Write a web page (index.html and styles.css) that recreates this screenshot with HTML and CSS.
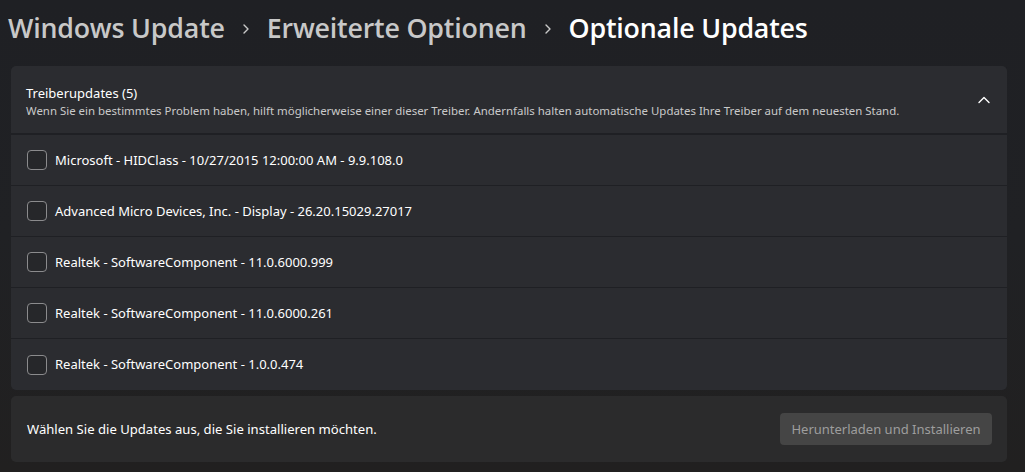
FILE: index.html
```html
<!DOCTYPE html>
<html lang="de">
<head>
<meta charset="utf-8">
<title>Optionale Updates</title>
<link rel="stylesheet" href="styles.css">
</head>
<body>
<div class="page">
  <h1 class="breadcrumb">
    <span class="crumb">Windows Update</span>
    <svg class="sep" width="10" height="12" viewBox="0 0 10 12"><path d="M3 2 L7 6 L3 10" fill="none" stroke="#c9c9c9" stroke-width="1.4" stroke-linecap="round" stroke-linejoin="round"/></svg>
    <span class="crumb">Erweiterte Optionen</span>
    <svg class="sep" width="10" height="12" viewBox="0 0 10 12"><path d="M3 2 L7 6 L3 10" fill="none" stroke="#c9c9c9" stroke-width="1.4" stroke-linecap="round" stroke-linejoin="round"/></svg>
    <span class="crumb current">Optionale Updates</span>
  </h1>

  <section class="expander">
    <div class="exp-header">
      <div class="exp-text">
        <div class="exp-title">Treiberupdates (5)</div>
        <div class="exp-desc">Wenn Sie ein bestimmtes Problem haben, hilft möglicherweise einer dieser Treiber. Andernfalls halten automatische Updates Ihre Treiber auf dem neuesten Stand.</div>
      </div>
      <svg class="chev" width="14" height="10" viewBox="0 0 14 10"><path d="M2 7.5 L7 2.5 L12 7.5" fill="none" stroke="#ffffff" stroke-width="1.4" stroke-linecap="round" stroke-linejoin="round"/></svg>
    </div>
    <div class="rows">
      <label class="row"><span class="box"></span><span class="row-text">Microsoft - HIDClass - 10/27/2015 12:00:00 AM - 9.9.108.0</span></label>
      <label class="row"><span class="box"></span><span class="row-text">Advanced Micro Devices, Inc. - Display - 26.20.15029.27017</span></label>
      <label class="row"><span class="box"></span><span class="row-text">Realtek - SoftwareComponent - 11.0.6000.999</span></label>
      <label class="row"><span class="box"></span><span class="row-text">Realtek - SoftwareComponent - 11.0.6000.261</span></label>
      <label class="row"><span class="box"></span><span class="row-text">Realtek - SoftwareComponent - 1.0.0.474</span></label>
    </div>
  </section>

  <section class="footer">
    <span class="footer-text">Wählen Sie die Updates aus, die Sie installieren möchten.</span>
    <button class="btn" disabled>Herunterladen und Installieren</button>
  </section>
</div>
</body>
</html>
```

FILE: styles.css
```css
* { box-sizing: border-box; }
html, body { margin: 0; padding: 0; }
body {
  width: 1025px;
  height: 472px;
  overflow: hidden;
  background: linear-gradient(180deg, #1f2024 0%, #202124 50%, #212020 100%);
  font-family: "Noto Sans", "Open Sans", sans-serif;
  color: #ffffff;
}
.page {
  display: flex;
  flex-direction: column;
  padding: 0 18px 0 11px;
}
.breadcrumb {
  margin: 0 0 0 -3px;
  height: 66px;
  display: flex;
  align-items: center;
  font-family: "Open Sans", sans-serif;
  font-weight: 600;
  font-size: 26.8px;
  letter-spacing: -0.2px;
  padding-bottom: 11px;
}
.crumb { color: #c8c8c8; }
.crumb.current { color: #ffffff; }
.sep { margin: 2px 16px 0 16px; }
.expander {
  border-radius: 5px;
  display: flex;
  flex-direction: column;
  gap: 2px;
  background: #1f2024;
}
.exp-header {
  background: #2b2c30;
  border-radius: 5px 5px 0 0;
  height: 67px;
  display: flex;
  align-items: center;
  padding: 0 16px 0 15px;
}
.exp-text { flex: 1; display: flex; flex-direction: column; gap: 1px; padding-top: 2px; }
.exp-title { font-size: 13px; color: #ffffff; }
.exp-desc { font-size: 11.45px; color: #c9c9c9; }
.chev { margin-top: 0; }
.rows {
  display: flex;
  flex-direction: column;
  gap: 1px;
}
.row {
  background: #2b2c30;
  height: 50px;
  display: flex;
  align-items: center;
  padding-left: 16px;
  gap: 8px;
}
.row:last-child { border-radius: 0 0 5px 5px; height: 51px; }
.box {
  width: 20px;
  height: 20px;
  border: 1px solid #8b8b8d;
  border-radius: 4px;
  background: #26272a;
  flex: none;
}
.row-text { font-size: 13px; color: #ffffff; margin-top: -1px; }
.footer {
  margin-top: 6px;
  background: #2b2b2c;
  border-radius: 5px;
  height: 66px;
  display: flex;
  align-items: center;
  justify-content: space-between;
  padding: 0 15px 0 16px;
}
.footer-text { font-size: 13.1px; color: #ffffff; }
.btn {
  width: 212px;
  height: 32px;
  border: none;
  border-radius: 4px;
  background: #454545;
  color: #9e9e9e;
  font-family: "Noto Sans", "Open Sans", sans-serif;
  font-size: 13px;
  padding: 0;
}
```
